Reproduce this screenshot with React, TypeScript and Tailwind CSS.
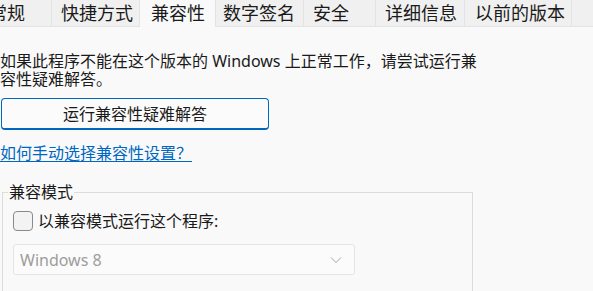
import React from "react";

const font = { fontFamily: '"Noto Sans", "Noto Sans CJK SC", sans-serif' };

type Tab = { label: string; w: string; pl: string; active?: boolean; first?: boolean };

const tabs: Tab[] = [
  { label: "常规", w: "w-[72px]", pl: "pl-[9px]", first: true },
  { label: "快捷方式", w: "w-[88px]", pl: "pl-[9px]" },
  { label: "兼容性", w: "w-[76px]", pl: "pl-[11px]", active: true },
  { label: "数字签名", w: "w-[88px]", pl: "pl-[7px]" },
  { label: "安全", w: "w-[72px]", pl: "pl-[9px]" },
  { label: "详细信息", w: "w-[89px]", pl: "pl-[9px]" },
  { label: "以前的版本", w: "w-[107px]", pl: "pl-[10px]" },
];

export default function App() {
  return (
    <div
      className="w-[593px] h-[291px] overflow-hidden bg-[#f9f9f9] text-[#1a1a1a]"
      style={font}
    >
      {/* Tab bar */}
      <div className="flex h-[27px] bg-[#f0f0f0] overflow-hidden">
        {tabs.map((t) => (
          <div
            key={t.label}
            className={[
              t.w,
              t.pl,
              "shrink-0 h-[27px] text-[18px] leading-[26px] whitespace-nowrap border-r border-[#e3e3e3]",
              t.first ? "-ml-[20px]" : "",
              t.active ? "bg-[#f9f9f9]" : "border-b border-b-[#e3e3e3]",
            ].join(" ")}
          >
            {t.label}
          </div>
        ))}
        <div className="flex-1 border-b border-[#e3e3e3]" />
      </div>

      {/* Content */}
      <div className="pt-[25px]">
        <p className="text-[16px] leading-[18px] w-[480px]">
          如果此程序不能在这个版本的 Windows 上正常工作，请尝试运行兼
          <br />
          容性疑难解答。
        </p>

        <button className="mt-[10px] ml-[1px] w-[268px] h-[32px] rounded-[4px] border border-[#0067c0] border-b-2 bg-[#fbfbfb] text-[16px] leading-[20px] text-[#1a1a1a] flex items-center justify-center">
          运行兼容性疑难解答
        </button>

        <div className="mt-[11px]">
          <a className="text-[16px] leading-[20px] text-[#0067c0] underline underline-offset-[2px] decoration-1">
            如何手动选择兼容性设置？
          </a>
        </div>

        {/* Group box */}
        <div className="relative mt-[27px] ml-[2px] w-[471px] h-[120px] border border-[#dcdcdc] border-b-0">
          <span className="absolute -top-[11px] left-[5px] px-[1px] bg-[#f9f9f9] text-[16px] leading-[20px]">
            兼容模式
          </span>
          <div className="pt-[18px] pl-[10px] flex items-center gap-[5px]">
            <div className="w-[20px] h-[20px] rounded-[4px] border border-[#8a8a8a] bg-[#f3f3f3]" />
            <span className="text-[16px] leading-[20px]">以兼容模式运行这个程序:</span>
          </div>
          <div className="mt-[13px] ml-[10px] w-[342px] h-[31px] rounded-[3px] border border-[#e5e5e5] bg-[#fbfbfb] flex items-center justify-between pl-[6px] pr-[12px]">
            <span className="text-[16px] text-[#9d9d9d]">Windows 8</span>
            <svg width="12" height="8" viewBox="0 0 12 8" fill="none">
              <path d="M1 1.5 L6 6.5 L11 1.5" stroke="#a8a8a8" strokeWidth="1" />
            </svg>
          </div>
        </div>
      </div>
    </div>
  );
}
